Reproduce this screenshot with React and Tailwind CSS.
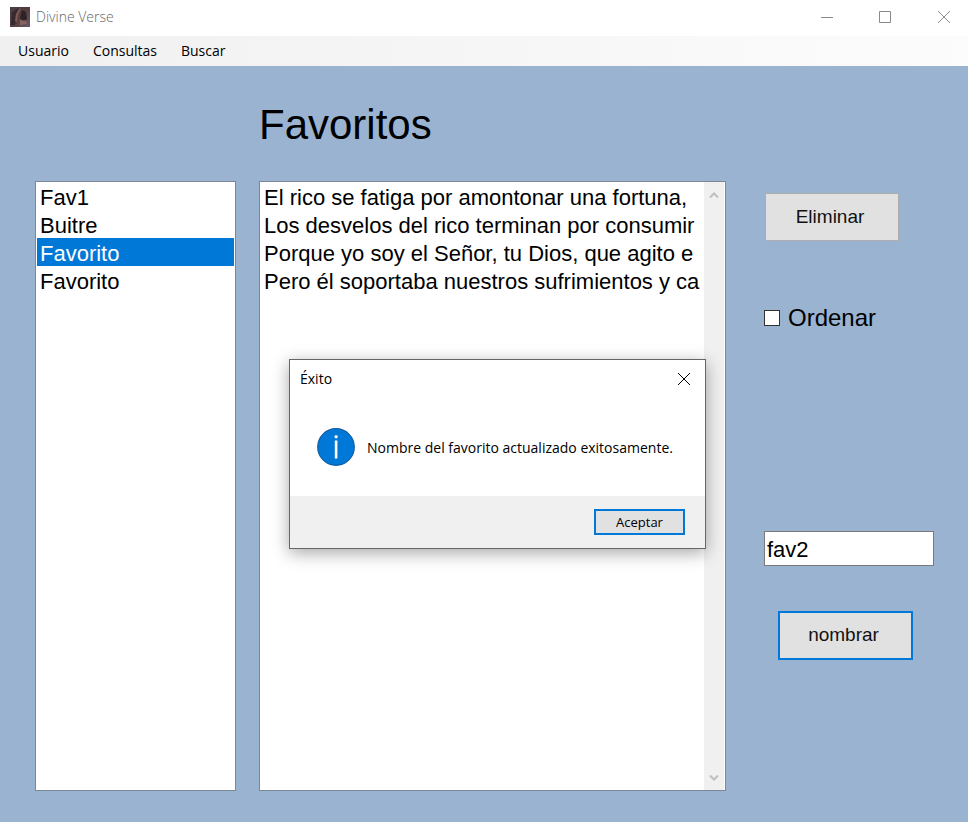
import React, { useState } from "react";

const favorites = ["Fav1", "Buitre", "Favorito", "Favorito"];

const verses = [
  "El rico se fatiga por amontonar una fortuna,",
  "Los desvelos del rico terminan por consumir",
  "Porque yo soy el Señor, tu Dios, que agito e",
  "Pero él soportaba nuestros sufrimientos y ca",
];

function AppIcon() {
  return (
    <svg className="size-5 shrink-0" viewBox="0 0 20 20" aria-hidden="true">
      <defs>
        <linearGradient id="iconBase" x1="0" y1="0" x2="1" y2="1">
          <stop offset="0" stopColor="#4a3e42" />
          <stop offset="0.5" stopColor="#553c3d" />
          <stop offset="1" stopColor="#6a5a68" />
        </linearGradient>
        <filter id="iconSoft">
          <feGaussianBlur stdDeviation="0.7" />
        </filter>
      </defs>
      <rect width="20" height="20" fill="url(#iconBase)" />
      <g filter="url(#iconSoft)">
        <path d="M2 5 L9 1 L6 9 L5 18 L1 18 Z" fill="#342a30" />
        <path d="M9 2 L11 1 L8 8 L7 15 L5 14 L6 7 Z" fill="#7d5a52" />
        <path d="M12 3 L16 5 L17 12 L13 14 L10 11 Z" fill="#2e2228" />
        <path d="M10 13 L16 14 L17 17 L10 18 Z" fill="#85645f" />
      </g>
    </svg>
  );
}

function TitleBar() {
  return (
    <header className="flex h-9 items-center bg-white pb-[3px] pl-2.5">
      <AppIcon />
      <span className="ml-1.5 flex-1 text-sm leading-5 font-light text-[#666666]">Divine Verse</span>
      <div className="flex text-[#8a8a8a]">
        <button type="button" aria-label="Minimizar" className="flex h-8 w-[58px] items-center justify-center">
          <svg className="size-3" viewBox="0 0 12 12" stroke="currentColor" fill="none">
            <path d="M0 6.5H12" />
          </svg>
        </button>
        <button type="button" aria-label="Maximizar" className="flex h-8 w-[58px] items-center justify-center">
          <svg className="size-3" viewBox="0 0 12 12" stroke="currentColor" fill="none">
            <path d="M.5 .5H11.5V11.5H.5Z" />
          </svg>
        </button>
        <button type="button" aria-label="Cerrar" className="flex h-8 w-[54px] items-center justify-center pl-1.5">
          <svg className="size-3" viewBox="0 0 12 12" stroke="currentColor" fill="none">
            <path d="M0 0L12 12M12 0L0 12" />
          </svg>
        </button>
      </div>
    </header>
  );
}

function MenuBar() {
  return (
    <nav className="flex h-[30px] items-center gap-6 bg-linear-to-r from-[#f0f0f0] to-[#fcfcfc] pl-[18px] text-sm text-black">
      <button type="button">Usuario</button>
      <button type="button">Consultas</button>
      <button type="button">Buscar</button>
    </nav>
  );
}

function ListBox({ items, selected, label }) {
  return (
    <select
      size={items.length}
      aria-label={label}
      defaultValue={selected}
      className="min-h-0 min-w-0 flex-1 appearance-none overflow-hidden bg-white text-[22px] text-black outline-none"
    >
      {items.map((text, i) => (
        <option
          key={i}
          value={i}
          className="block h-7 min-h-7 px-[3px] pt-[3px] pb-0 leading-[25px] whitespace-nowrap checked:bg-[#0078d7] checked:bg-linear-to-r checked:from-[#0078d7] checked:to-[#0078d7] checked:text-white"
        >
          {text}
        </option>
      ))}
    </select>
  );
}

function ScrollBar() {
  return (
    <div className="flex w-5 shrink-0 flex-col justify-between bg-[#f0f0f0] pt-[5px] pb-1 text-[#bfbfbf]">
      <button type="button" aria-label="Subir" className="flex h-4 items-center justify-center">
        <svg className="h-2 w-2.5" viewBox="0 0 10 8" fill="none" stroke="currentColor" strokeWidth="2">
          <path d="M1 6.5L5 2.5L9 6.5" />
        </svg>
      </button>
      <button type="button" aria-label="Bajar" className="flex h-4 items-center justify-center">
        <svg className="h-2 w-2.5" viewBox="0 0 10 8" fill="none" stroke="currentColor" strokeWidth="2">
          <path d="M1 1.5L5 5.5L9 1.5" />
        </svg>
      </button>
    </div>
  );
}

function SidePanel() {
  const [name, setName] = useState("fav2");
  return (
    <section className="col-start-3 row-start-2 flex flex-col items-start pt-3 pl-[15px]">
      <button type="button" className="ml-px h-12 w-[134px] border border-[#adadad] bg-[#e1e1e1] pr-1 text-[19px] text-[#111111]">
        Eliminar
      </button>
      <label className="mt-[61px] flex items-center gap-2 text-2xl leading-8 text-black">
        <input type="checkbox" className="size-4 appearance-none border border-[#333333] bg-white" />
        Ordenar
      </label>
      <input
        type="text"
        aria-label="Nombre del favorito"
        value={name}
        onChange={(e) => setName(e.target.value)}
        className="mt-[197px] h-[35px] w-full border border-[#7a7a7a] bg-white px-0.5 pt-0.5 text-[22px] text-black outline-none"
      />
      <button type="button" className="mt-[45px] ml-3.5 h-[49px] w-[135px] border-2 border-[#0078d7] bg-[#e1e1e1] pr-1 text-[19px] text-[#111111]">
        nombrar
      </button>
    </section>
  );
}

function SuccessDialog() {
  return (
    <div
      role="alertdialog"
      aria-labelledby="dialog-title"
      aria-describedby="dialog-text"
      className="absolute top-[359px] left-[289px] flex w-[417px] flex-col border border-[#666666] bg-white font-['Open_Sans',sans-serif] shadow-[0_4px_16px_rgba(0,0,0,0.35)]"
    >
      <div className="flex h-[38px] items-center justify-between pr-[15px] pl-2.5">
        <h2 id="dialog-title" className="text-sm text-black">Éxito</h2>
        <button type="button" aria-label="Cerrar" className="text-black">
          <svg className="size-3" viewBox="0 0 12 12" stroke="currentColor" fill="none">
            <path d="M0 0L12 12M12 0L0 12" />
          </svg>
        </button>
      </div>
      <div className="flex h-[98px] items-center gap-3 pl-[27px]">
        <svg className="size-[38px] shrink-0" viewBox="0 0 38 38" aria-hidden="true">
          <circle cx="19" cy="19" r="18.3" fill="#0078d7" stroke="#0f5ea8" strokeWidth="1.2" />
          <rect x="17.8" y="12.5" width="2.6" height="18" fill="#fff" />
          <rect x="17.6" y="7.3" width="3" height="3" rx="1" fill="#fff" />
        </svg>
        <p id="dialog-text" className="pt-0.5 text-sm whitespace-nowrap text-black">
          Nombre del favorito actualizado exitosamente.
        </p>
      </div>
      <div className="flex h-[52px] items-center justify-end bg-[#f0f0f0] pr-5">
        <button type="button" className="h-[26px] w-[91px] border-2 border-[#0078d7] bg-[#e1e1e1] text-[13px] leading-5 text-black">
          Aceptar
        </button>
      </div>
    </div>
  );
}

export default function App() {
  return (
    <div className="relative flex min-h-screen flex-col bg-[#9ab3d1] font-['Open_Sans',sans-serif]">
      <TitleBar />
      <MenuBar />
      <main className="grid flex-1 grid-cols-[201px_minmax(0,1fr)_185px] grid-rows-[auto_1fr] gap-x-[23px] pt-8 pr-[34px] pb-[31px] pl-[35px] font-['Liberation_Sans',sans-serif]">
        <h1 className="col-start-2 row-start-1 h-[83px] text-[42px] leading-[54px] font-normal text-black">Favoritos</h1>
        <div className="col-start-1 row-start-2 flex border border-[#7b8794] bg-white px-px">
          <ListBox items={favorites} selected={2} label="Favoritos" />
        </div>
        <div className="col-start-2 row-start-2 flex border border-[#7b8794] bg-white pr-px pl-px">
          <ListBox items={verses} label="Versículos" />
          <ScrollBar />
        </div>
        <SidePanel />
      </main>
      <SuccessDialog />
    </div>
  );
}
